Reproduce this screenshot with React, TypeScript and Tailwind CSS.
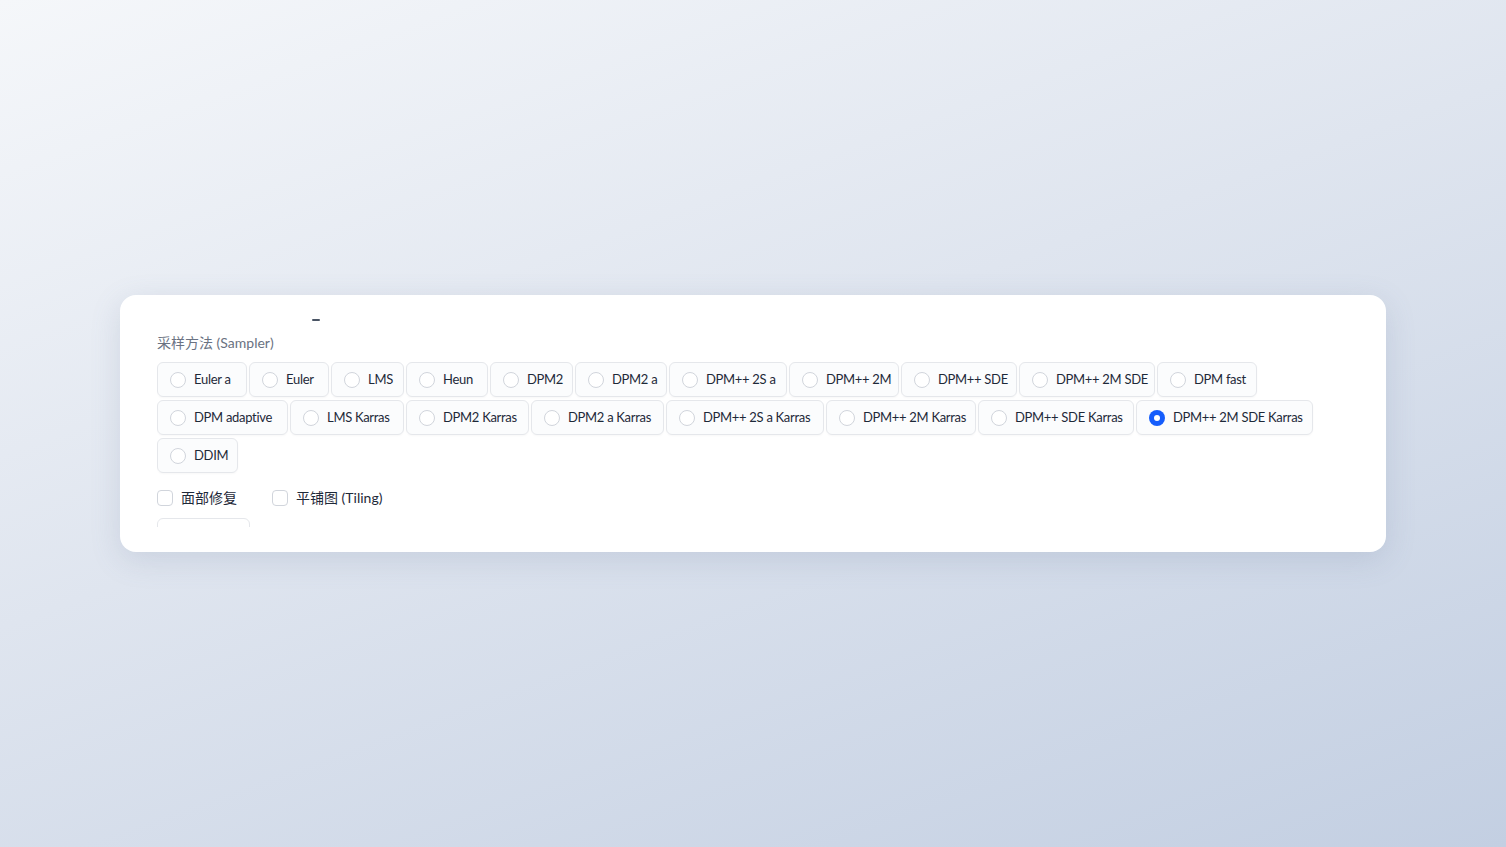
import { useState } from 'react';

// pill widths measured from the design so rows wrap at the same spot
const samplers: [string, number][] = [
  ['Euler a', 90], ['Euler', 80], ['LMS', 73], ['Heun', 82], ['DPM2', 83], ['DPM2 a', 92],
  ['DPM++ 2S a', 118], ['DPM++ 2M', 110], ['DPM++ SDE', 116], ['DPM++ 2M SDE', 136],
  ['DPM fast', 100], ['DPM adaptive', 131], ['LMS Karras', 114], ['DPM2 Karras', 123],
  ['DPM2 a Karras', 133], ['DPM++ 2S a Karras', 158], ['DPM++ 2M Karras', 150],
  ['DPM++ SDE Karras', 156], ['DPM++ 2M SDE Karras', 177], ['DDIM', 81],
];

export default function App() {
  const [sampler, setSampler] = useState('DPM++ 2M SDE Karras');
  const [face, setFace] = useState(false);
  const [tiling, setTiling] = useState(false);

  return (
    <div
      className="w-full h-[847px] flex items-center justify-center bg-[linear-gradient(160deg,#f5f7fa_0%,#dfe5ef_45%,#c3cfe2_100%)]"
      style={{ fontFamily: '"Source Sans Pro", Lato, "Noto Sans CJK SC", sans-serif' }}
    >
      <div className="w-[1266px] h-[257px] bg-white rounded-2xl shadow-[0_8px_30px_rgba(100,116,150,0.18)] flex flex-col px-[37px] pt-[22px] pb-[25px]">
        <div className="flex-1 overflow-hidden flex flex-col">
          {/* stray slider tick */}
          <div className="h-[6px] relative shrink-0">
            <span className="absolute left-[155px] top-[2px] w-[8px] h-[1.5px] bg-gray-600 rounded" />
          </div>

          <label className="text-[14px] text-gray-500 mt-[10px] leading-5">采样方法 (Sampler)</label>

          <div className="flex flex-wrap gap-x-[2px] gap-y-[3px] mt-[9px]">
            {samplers.map(([s, w]) => {
              const on = s === sampler;
              return (
                <button
                  key={s}
                  onClick={() => setSampler(s)}
                  style={{ width: w }}
                  className="h-[35px] flex items-center gap-2 pl-3 rounded-md border border-gray-200 bg-gray-50/60 shadow-[0_1px_2px_rgba(0,0,0,0.03)] text-[13px] tracking-[-0.3px] text-gray-800 whitespace-nowrap"
                >
                  <span
                    className={
                      on
                        ? 'w-4 h-4 shrink-0 rounded-full bg-blue-600 flex items-center justify-center'
                        : 'w-4 h-4 shrink-0 rounded-full border border-gray-300 bg-white'
                    }
                  >
                    {on && <span className="w-[6px] h-[6px] rounded-full bg-white" />}
                  </span>
                  {s}
                </button>
              );
            })}
          </div>

          <div className="flex items-center gap-[35px] mt-[14px] text-[14px] text-gray-800">
            <label className="flex items-center gap-2 cursor-pointer" onClick={() => setFace(!face)}>
              <span className={face ? 'w-4 h-4 rounded bg-blue-600' : 'w-4 h-4 rounded border border-gray-300 bg-white'} />
              面部修复
            </label>
            <label className="flex items-center gap-2 cursor-pointer" onClick={() => setTiling(!tiling)}>
              <span className={tiling ? 'w-4 h-4 rounded bg-blue-600' : 'w-4 h-4 rounded border border-gray-300 bg-white'} />
              平铺图 (Tiling)
            </label>
          </div>

          <div className="w-[93px] h-[35px] shrink-0 mt-[10px] rounded-md border border-gray-200 bg-white" />
        </div>
      </div>
    </div>
  );
}
